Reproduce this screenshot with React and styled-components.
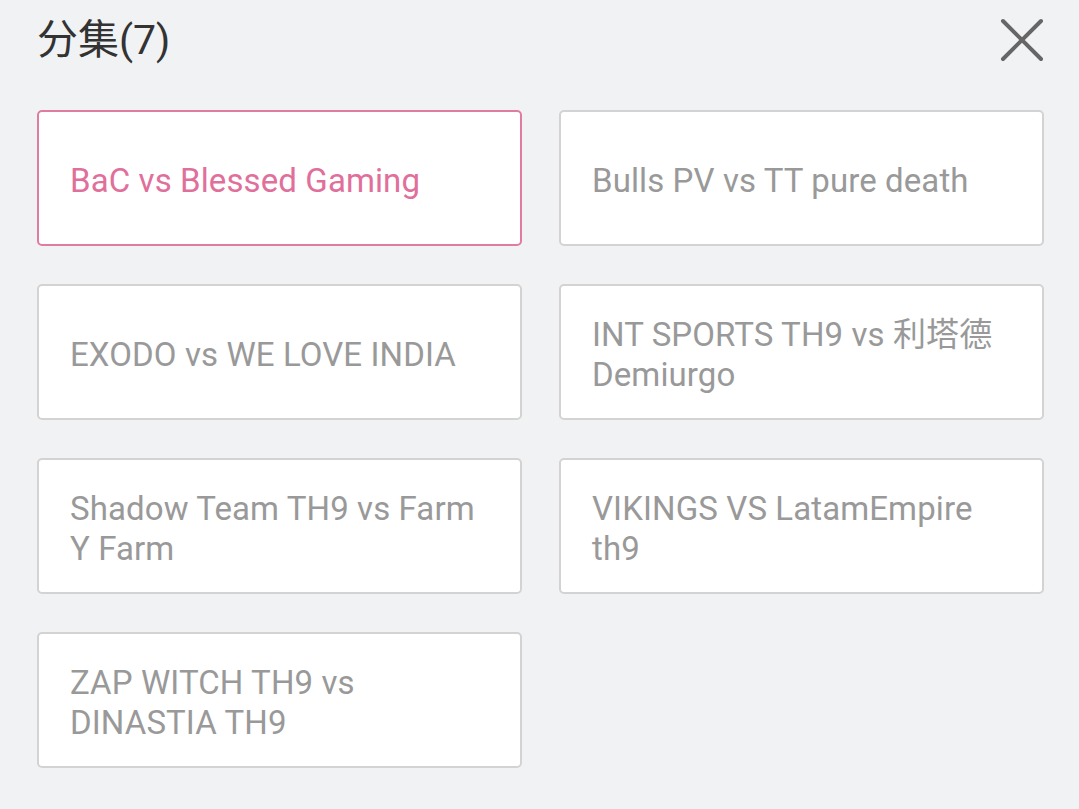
import React from 'react';
import styled, { createGlobalStyle } from 'styled-components';

const GlobalStyle = createGlobalStyle`
    html, body {
        margin: 0;
        padding: 0;
        background: #f1f2f4;
    }
    body {
        font-family: Roboto, "Noto Sans", "Noto Sans CJK SC", sans-serif;
    }
`;

const Page = styled.div`
    width: 1079px;
    height: 809px;
    box-sizing: border-box;
    padding: 0 35px 0 37px;
    background: #f1f2f4;
`;

const Header = styled.div`
    height: 80px;
    box-sizing: border-box;
    padding-top: 16px;
    display: flex;
    align-items: flex-start;
    justify-content: space-between;
`;

const Title = styled.h1`
    margin: 0;
    font-size: 41px;
    line-height: 48px;
    font-weight: 400;
    color: #333;
    font-family: Roboto, "Noto Sans CJK SC", sans-serif;
`;

const CloseButton = styled.button`
    width: 48px;
    height: 48px;
    padding: 0;
    margin-right: -2px;
    border: 0;
    background: none;
    display: flex;
    align-items: center;
    justify-content: center;
    cursor: pointer;
`;

const Grid = styled.div`
    margin-top: 30px;
    display: grid;
    grid-template-columns: 485px 485px;
    grid-auto-rows: 136px;
    column-gap: 37px;
    row-gap: 38px;
`;

const Episode = styled.div`
    box-sizing: border-box;
    border: 2px solid ${p => (p.$active ? '#e07ca2' : '#d3d3d3')};
    border-radius: 5px;
    background: #fff;
    padding: 5px 28px 0 31px;
    display: flex;
    align-items: center;
    font-size: 33px;
    line-height: 40px;
    letter-spacing: 0.1px;
    color: ${p => (p.$active ? '#e0709b' : '#999')};
    cursor: pointer;
`;

const episodes = [
    'BaC vs Blessed Gaming',
    'Bulls PV vs TT pure death',
    'EXODO vs WE LOVE INDIA',
    'INT SPORTS TH9 vs 利塔德 Demiurgo',
    'Shadow Team TH9 vs Farm Y Farm',
    'VIKINGS VS LatamEmpire th9',
    'ZAP WITCH TH9 vs DINASTIA TH9',
];

export default function App() {
    return (
        <Page>
            <GlobalStyle />
            <Header>
                <Title>分集({episodes.length})</Title>
                <CloseButton aria-label="close">
                    <svg width="44" height="44" viewBox="0 0 44 44">
                        <path d="M3 3 L41 41 M41 3 L3 41" stroke="#666" strokeWidth="4" strokeLinecap="round" />
                    </svg>
                </CloseButton>
            </Header>
            <Grid>
                {episodes.map((name, i) => (
                    <Episode key={name} $active={i === 0}>{name}</Episode>
                ))}
            </Grid>
        </Page>
    );
}
